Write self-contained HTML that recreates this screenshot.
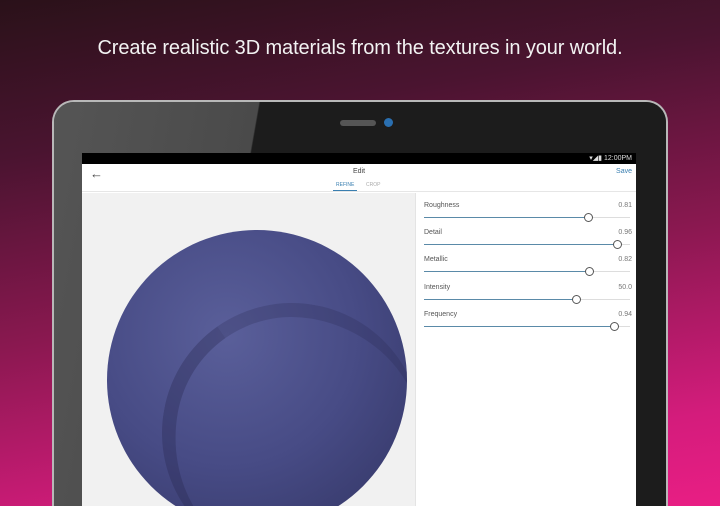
<!DOCTYPE html><html><head><style>
*{margin:0;padding:0;box-sizing:border-box}
html,body{width:720px;height:506px;overflow:hidden}
body{position:relative;font-family:"Liberation Sans",sans-serif;
background:linear-gradient(170deg,#2a1119 0%,#4a1430 25%,#8a1850 55%,#d41c7c 85%,#e91e84 100%)}
.h{position:absolute;top:37px;width:720px;text-align:center;color:#f2f2f2;font-size:20px;font-weight:normal;letter-spacing:-.1px}
.tab{position:absolute;left:52px;top:100px;width:616px;height:406px;border-radius:22px 22px 0 0;background:#1c1c1c;border:2px solid #b8b8b8;border-bottom:none;overflow:hidden}
.refl{position:absolute;left:0;top:0;width:100%;height:100%;background:linear-gradient(100deg,#555 0%,#4a4a4a 30%,#1c1c1c 30.2%,#1c1c1c 100%)}
.spk{position:absolute;left:286px;top:18px;width:36px;height:6px;border-radius:3px;background:#555}
.cam{position:absolute;left:330px;top:16px;width:9px;height:9px;border-radius:50%;background:#2a6fb0}
.scr{position:absolute;left:82px;top:153px;width:554px;height:353px;background:#fff;overflow:hidden}
.sb{height:11px;background:#000;color:#ddd;font-size:7px;text-align:right;padding-right:4px;line-height:11px}
.ab{height:28px;position:relative;border-bottom:1px solid #e6e6e6}
.img{position:absolute;left:0;top:40px;width:333px;height:313px;background:#f1f1f1;overflow:hidden}
.sph{position:absolute;left:25px;top:37px;width:300px;height:300px;border-radius:50%;overflow:hidden;
background:radial-gradient(circle at 40% 35%,#5a5f9a,#474b85 50%,#3a3d70 80%,#33355f)}
.p{position:absolute;left:342px;font-size:7px;color:#555;width:208px}
.p .v{position:absolute;right:0;top:0;color:#777}
.tr{position:absolute;left:342px;width:206px;height:1px;background:#ddd}
.tr i{position:absolute;left:0;top:0;height:1px;background:#5a8aa8}
.tr b{position:absolute;top:-4px;width:9px;height:9px;border-radius:50%;border:1px solid #555;background:#fff}
</style></head><body>
<div class="h">Create realistic 3D materials from the textures in your world.</div>
<div class="tab"><div class="refl"></div><div class="spk"></div><div class="cam"></div></div>
<div class="scr">
<div class="sb">▾◢▮ 12:00PM</div>
<div class="ab">
<div style="position:absolute;left:8px;top:2px;font-size:13px;color:#444">←</div>
<div style="position:absolute;left:0;width:554px;top:4px;text-align:center;font-size:7px;color:#444">Edit</div>
<div style="position:absolute;right:4px;top:4px;font-size:7px;color:#3a7fb0">Save</div>
</div>
<div style="position:absolute;left:251px;top:29px;font-size:5px;color:#3a7fb0;border-bottom:1.5px solid #3a7fb0;padding:0 3px 2px">REFINE</div>
<div style="position:absolute;left:284px;top:29px;font-size:5px;color:#aaa">CROP</div>
<div class="img"><div class="sph">
<div style="position:absolute;left:55px;top:73px;width:260px;height:260px;border-radius:50%;border-left:14px solid rgba(40,42,80,.35);border-top:14px solid rgba(40,42,80,.25);transform:rotate(10deg)"></div></div></div>
<div style="position:absolute;left:333px;top:40px;width:1px;height:313px;background:#e4e4e4"></div>
<div class="p" style="top:49px">Roughness<span class="v">0.81</span></div><div class="tr" style="top:64px"><i style="width:164px"></i><b style="left:160px"></b></div>
<div class="p" style="top:76px">Detail<span class="v">0.96</span></div><div class="tr" style="top:91px"><i style="width:193px"></i><b style="left:189px"></b></div>
<div class="p" style="top:103px">Metallic<span class="v">0.82</span></div><div class="tr" style="top:118px"><i style="width:165px"></i><b style="left:161px"></b></div>
<div class="p" style="top:131px">Intensity<span class="v">50.0</span></div><div class="tr" style="top:146px"><i style="width:152px"></i><b style="left:148px"></b></div>
<div class="p" style="top:158px">Frequency<span class="v">0.94</span></div><div class="tr" style="top:173px"><i style="width:190px"></i><b style="left:186px"></b></div>
</div>
</body></html>
